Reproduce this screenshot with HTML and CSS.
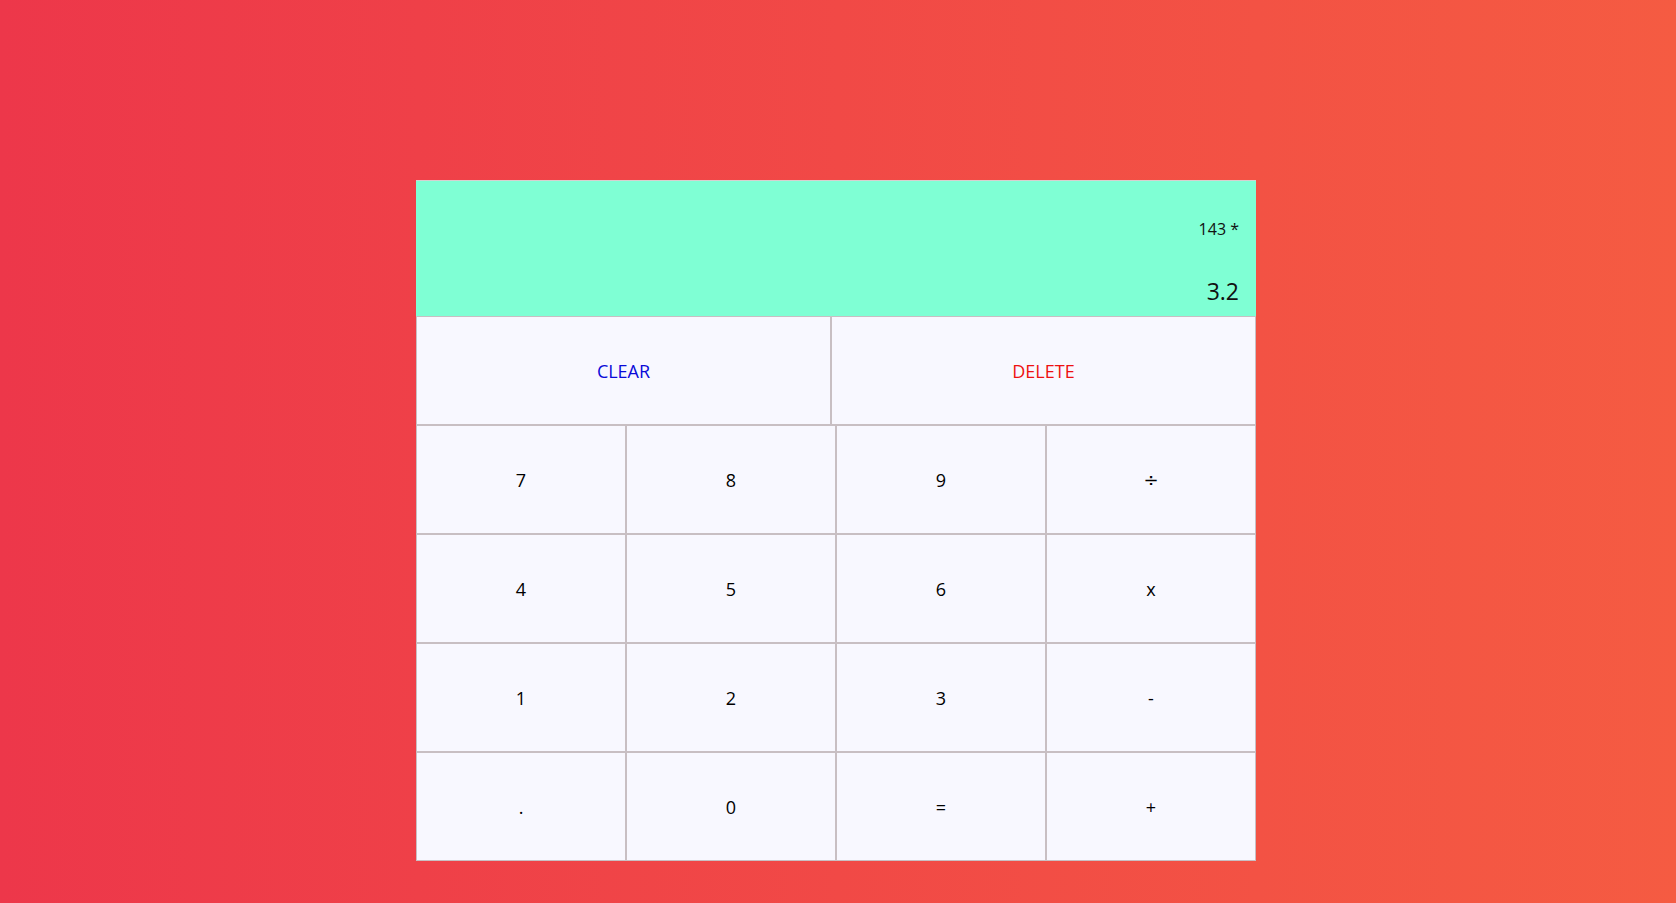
FILE: index.html
```html
<!DOCTYPE html>
<html>
<head>
<meta charset="utf-8">
<link rel="stylesheet" href="styles.css">
</head>
<body>
<div class="calc">
  <div class="display">
    <div class="prev">143 *</div>
    <div class="curr">3.2</div>
  </div>
  <div class="toprow">
    <button class="btn clear">CLEAR</button>
    <button class="btn del">DELETE</button>
  </div>
  <div class="keys">
    <button class="btn">7</button>
    <button class="btn">8</button>
    <button class="btn">9</button>
    <button class="btn div">÷</button>
    <button class="btn">4</button>
    <button class="btn">5</button>
    <button class="btn">6</button>
    <button class="btn">x</button>
    <button class="btn">1</button>
    <button class="btn">2</button>
    <button class="btn">3</button>
    <button class="btn">-</button>
    <button class="btn">.</button>
    <button class="btn">0</button>
    <button class="btn">=</button>
    <button class="btn">+</button>
  </div>
</div>
</body>
</html>
```
FILE: styles.css
```css
html, body {
  margin: 0;
  height: 100%;
}
body {
  background: linear-gradient(to right, #ed374a, #f55b42);
  font-family: "Open Sans", "Noto Sans", sans-serif;
  overflow: hidden;
}
.calc {
  width: 840px;
  margin: 180px 0 0 416px;
}
.display {
  height: 136px;
  box-sizing: border-box;
  background: #7fffd4;
  border-top: 1px solid #d8d0d0;
  padding: 0 17px 0 0;
  display: flex;
  flex-direction: column;
  align-items: flex-end;
  color: #111;
}
.prev {
  margin-top: 36px;
  font-size: 16px;
  line-height: 24px;
}
.curr {
  margin-top: 35px;
  font-size: 23px;
  line-height: 30px;
}
.btn {
  box-sizing: border-box;
  height: 109px;
  margin: 0;
  background: #f8f8ff;
  border: 1px solid #c8bfc3;
  font-family: "Open Sans", "Noto Sans", sans-serif;
  font-size: 18px;
  color: #000;
  padding: 0;
}
.div {
  font-family: "DejaVu Sans", sans-serif;
  font-size: 18px;
}
.toprow {
  display: grid;
  grid-template-columns: 415px 425px;
}
.keys {
  display: grid;
  grid-template-columns: repeat(4, 210px);
}
.clear {
  color: #0a0ad8;
}
.del {
  color: #ee1111;
}
```
